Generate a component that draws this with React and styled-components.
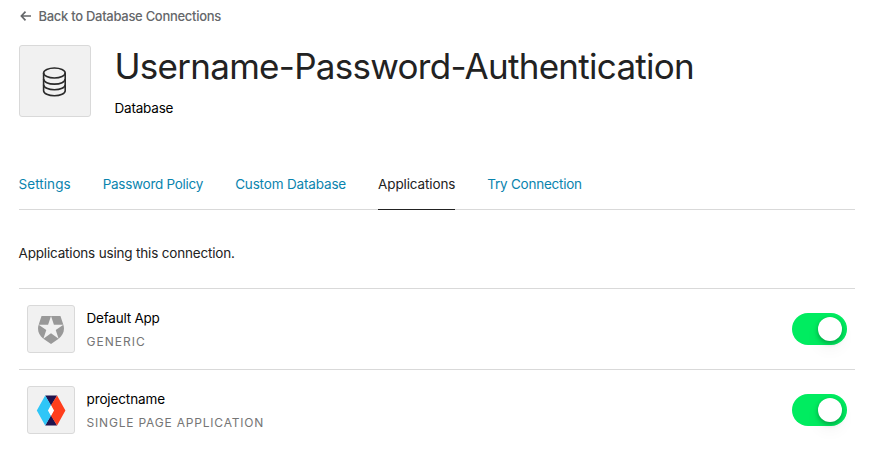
import React from "react";
import styled, { createGlobalStyle } from "styled-components";

const GlobalStyle = createGlobalStyle`
  * { box-sizing: border-box; }
  body {
    margin: 0;
    background: #fff;
    color: #1e1e1e;
    font: 14px/24px Inter, "Liberation Sans", sans-serif;
  }
`;

const Page = styled.main`
  padding: 4px 14px 0 18.5px;
`;

const BackLink = styled.a`
  display: flex;
  align-items: center;
  gap: 7px;
  height: 24px;
  color: #65676a;
  font-size: 13px;
  font-weight: 500;
  letter-spacing: -0.29px;
  white-space: nowrap;
`;

const Header = styled.header`
  display: flex;
  gap: 24px;
  height: 72px;
  margin-top: 17px;
`;

const Tile = styled.div`
  display: flex;
  flex: none;
  align-items: center;
  justify-content: center;
  width: ${(p) => p.$size}px;
  height: ${(p) => p.$size}px;
  border: 1px solid #d9d9d9;
  border-radius: 3px;
  background: #f1f1f1;
  svg { display: block; }
`;

const Title = styled.h1`
  margin: 0;
  color: #222;
  font-size: 35px;
  font-weight: 400;
  line-height: 43px;
  letter-spacing: -0.72px;
  white-space: nowrap;
`;

const Kind = styled.div`
  margin-top: 8px;
  color: #000;
  font-size: 13.5px;
  letter-spacing: -0.2px;
`;

const Tabs = styled.nav`
  display: flex;
  gap: 32px;
  height: 51px;
  margin-top: 42px;
  border-bottom: 1px solid #d9d9d9;
`;

const Tab = styled.a`
  height: 51px;
  padding-top: 13px;
  border-bottom: 1px solid ${(p) => (p.$active ? "#222" : "transparent")};
  color: ${(p) => (p.$active ? "#222" : "#0a84ae")};
  font-size: 13.5px;
  letter-spacing: ${(p) => p.$tracking}px;
  white-space: nowrap;
`;

const Intro = styled.p`
  margin: 31px 0 23px;
  color: #222;
  font-size: 13.5px;
  letter-spacing: -0.18px;
`;

const AppRow = styled.div`
  display: flex;
  align-items: center;
  gap: 12px;
  height: 81px;
  padding: 0 8px;
  border-top: 1px solid #d9d9d9;
`;

const AppText = styled.div`
  flex: 1;
`;

const AppName = styled.div`
  margin-top: 1px;
  color: #000;
  font-size: 13.5px;
  letter-spacing: ${(p) => p.$tracking}px;
`;

const AppType = styled.div`
  color: #757575;
  font-size: 12px;
  letter-spacing: ${(p) => p.$tracking}px;
  text-transform: uppercase;
`;

const Switch = styled.button`
  display: flex;
  justify-content: flex-end;
  width: 55px;
  height: 32px;
  padding: 4px 5px;
  border: 0;
  border-radius: 16px;
  background: #00ec60;
`;

const Knob = styled.span`
  width: 24px;
  height: 24px;
  border-radius: 50%;
  background: #fff;
  box-shadow: 0 2px 5px rgba(0, 0, 0, 0.3), 0 8px 16px rgba(0, 0, 0, 0.05);
`;

const ArrowIcon = () => (
  <svg width="13" height="12" viewBox="0 0 13 12" fill="none" stroke="currentColor" strokeWidth="1.7">
    <path d="M12 6H2.5M6.5 1.7L2.4 6L6.5 10.3" />
  </svg>
);

const DatabaseIcon = () => (
  <svg width="26" height="32" viewBox="0 0 26 32" fill="none" stroke="#2a2a2a" strokeWidth="1.6">
    <ellipse cx="12.4" cy="8" rx="10.8" ry="5" />
    <path d="M1.6 8v17.8c0 2.8 4.8 5 10.8 5s10.8-2.2 10.8-5V8" />
    <path d="M1.6 14.1c0 2.8 4.8 5 10.8 5s10.8-2.2 10.8-5M1.6 19.8c0 2.8 4.8 5 10.8 5s10.8-2.2 10.8-5" />
  </svg>
);

const ShieldIcon = () => (
  <svg width="26" height="30" viewBox="1.5 -1.7 21 25.7" preserveAspectRatio="none" fill="#999">
    <path d="M21.98 7.448L19.62 0H4.347L2.02 7.448c-1.352 4.312.03 9.206 3.815 12.015L12.007 24l6.157-4.552c3.755-2.81 5.182-7.688 3.815-12.015l-6.16 4.58 2.343 7.45-6.157-4.597-6.158 4.58 2.358-7.433-6.188-4.55 7.63-.045L12.008 0l2.356 7.404 7.615.044z" />
  </svg>
);

const HexIcon = () => (
  <svg width="30" height="32" viewBox="0 -0.5 30 32">
    <path fill="#20134d" d="M9.2 1h11.9L15 11.5zM9.2 31h11.9L15 20.5z" />
    <path fill="#2fc6f7" d="M9.2 1L.8 16l8.4 15L15 21.2L12.2 16L15 10.8z" />
    <path fill="#ff3e1d" d="M21.1 1l8.3 15l-8.3 15L15 21.2L17.8 16L15 10.8z" />
    <path fill="#fff" d="M15 10.8l2.9 5.2L15 21.2L12.1 16z" />
  </svg>
);

const tabs = [
  { label: "Settings", tracking: 0.06 },
  { label: "Password Policy", tracking: -0.27 },
  { label: "Custom Database", tracking: -0.16 },
  { label: "Applications", tracking: -0.12, active: true },
  { label: "Try Connection", tracking: -0.24 },
];

const apps = [
  { name: "Default App", nameTracking: -0.21, type: "Generic", typeTracking: 1.02, Icon: ShieldIcon },
  { name: "projectname", nameTracking: -0.12, type: "Single Page Application", typeTracking: 0.81, Icon: HexIcon },
];

export default function App() {
  return (
    <>
      <GlobalStyle />
      <Page>
        <BackLink>
          <ArrowIcon />
          Back to Database Connections
        </BackLink>
        <Header>
          <Tile $size={72}><DatabaseIcon /></Tile>
          <div>
            <Title>Username-Password-Authentication</Title>
            <Kind>Database</Kind>
          </div>
        </Header>
        <Tabs>
          {tabs.map((t) => (
            <Tab key={t.label} $active={t.active} $tracking={t.tracking}>{t.label}</Tab>
          ))}
        </Tabs>
        <Intro>Applications using this connection.</Intro>
        {apps.map(({ name, nameTracking, type, typeTracking, Icon }) => (
          <AppRow key={name}>
            <Tile $size={48}><Icon /></Tile>
            <AppText>
              <AppName $tracking={nameTracking}>{name}</AppName>
              <AppType $tracking={typeTracking}>{type}</AppType>
            </AppText>
            <Switch role="switch" aria-checked="true" aria-label={name}>
              <Knob />
            </Switch>
          </AppRow>
        ))}
      </Page>
    </>
  );
}
